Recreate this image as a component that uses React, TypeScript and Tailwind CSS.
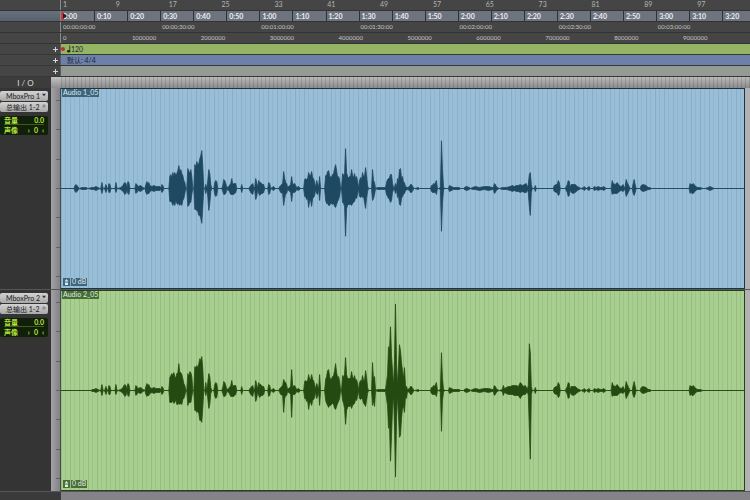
import { useState } from "react";
import { twMerge } from "tailwind-merge";

// [x, peak above the zero line, peak below it (same as above when left out)]
type Peak = [number, number, number?];

interface TrackProps {
  id: number;
  input: string;
  output: string;
  clip: string;
  peaks: Peak[];
  color: string;
  wave: string;
  badge: string;
}

const bars = [1, 9, 17, 25, 33, 41, 49, 57, 65, 73, 81, 89, 97];
const minSecs = Array.from(
  { length: 21 },
  (_, i) => `${Math.floor(i / 6)}:${(i % 6) * 10 || "00"}`
);
const timecodes = [
  "00:00:00:00",
  "00:00:30:00",
  "00:01:00:00",
  "00:01:30:00",
  "00:02:00:00",
  "00:02:30:00",
  "00:03:00:00",
];
const samples = Array.from({ length: 10 }, (_, i) => String(i * 1000000));

// quiet passages that both microphones picked up
const intro: Peak[] = [
  [31, 1], [33, 1], [35, 2], [37, 1], [39, 0], [40, 1], [41, 6, 5], [42, 1],
  [43, 0], [44, 1], [45, 4], [46, 1], [47, 0], [48, 5, 4], [49, 4], [50, 0],
  [54, 0], [55, 6, 4], [56, 1], [57, 0], [60, 1], [62, 3], [63, 5, 4],
  [64, 6], [65, 5], [66, 1], [67, 7, 5], [68, 6], [69, 0], [74, 0], [75, 5],
  [76, 4], [77, 2], [80, 3], [82, 1], [84, 0], [85, 4], [86, 7, 6], [87, 5],
  [88, 6, 5], [89, 3], [91, 2], [93, 3], [95, 2], [97, 2], [99, 2], [100, 1],
  [101, 4], [102, 3], [103, 0], [107, 0],
];
const middle: Peak[] = [
  [153, 0], [154, 6], [155, 8], [156, 7], [157, 0], [161, 0], [162, 3],
  [163, 9, 6], [164, 8, 6], [165, 5], [166, 1], [168, 2], [170, 5, 6],
  [171, 10, 6], [172, 4, 6], [173, 5, 6], [174, 5], [175, 5, 4], [176, 0],
  [180, 0], [181, 4], [182, 0], [188, 0], [190, 3, 4], [191, 4, 5],
  [192, 5, 6], [193, 1], [194, 1], [195, 10, 11], [196, 6, 8], [197, 1],
  [198, 8, 5], [199, 6, 7], [200, 6], [201, 5], [202, 4, 5], [203, 4],
  [204, 0], [207, 0], [208, 6], [209, 5], [210, 0], [213, 2], [214, 1],
  [215, 0], [218, 0], [219, 2], [220, 3, 4], [222, 5],
];
const pause: Peak[] = [
  [347, 1], [349, 2], [350, 4], [351, 4], [353, 1], [354, 0], [358, 1],
  [359, 0], [370, 0], [371, 3], [372, 3, 4], [373, 5, 4], [374, 4],
  [375, 6, 4], [376, 8, 6], [377, 0], [379, 0], [380, 2],
];
const rest: Peak[] = [
  [383, 2], [384, 0], [388, 0], [389, 3], [391, 2], [393, 1], [399, 1],
  [400, 0], [403, 0], [404, 1], [406, 2], [409, 1], [410, 0], [412, 1],
  [415, 2, 1], [419, 1, 2], [424, 2, 1], [428, 2], [432, 1], [433, 1],
  [434, 5], [435, 4], [436, 2], [437, 1], [439, 0], [442, 1],
];
const outro: Peak[] = [
  [471, 4], [472, 0], [474, 0], [475, 3], [476, 0], [493, 0], [494, 3],
  [496, 4], [497, 4], [498, 8, 7], [499, 6], [500, 0], [505, 0], [506, 2],
  [507, 4], [508, 8], [509, 7], [510, 1], [511, 4], [513, 4, 5], [515, 4],
  [517, 2], [519, 1], [521, 0], [523, 1], [524, 2], [526, 0], [529, 2],
  [530, 0], [533, 0], [534, 2], [536, 1], [538, 2], [540, 1], [542, 1],
  [543, 2], [545, 1], [546, 0], [551, 0], [552, 8, 6], [553, 5], [555, 4, 5],
  [557, 6, 5], [559, 3], [561, 2], [563, 4, 3], [564, 1], [565, 2],
  [566, 9, 8], [567, 6], [568, 4], [569, 2], [570, 0], [572, 0], [573, 5],
  [574, 9, 7], [575, 4], [576, 0], [580, 0], [581, 3, 2], [583, 4, 3],
  [586, 3, 2], [588, 1], [590, 1], [591, 0], [629, 0], [630, 5], [631, 4],
  [632, 4, 5], [633, 5], [635, 3], [637, 1], [640, 1], [643, 0],
];

const peaks1: Peak[] = [
  [0, 0], [13, 0], [14, 3], [15, 4], [17, 2], [18, 0], [21, 1], [25, 1], [27, 0],
  ...intro,
  [108, 0], [109, 12, 13], [110, 14, 13], [111, 11, 14], [112, 16, 17],
  [113, 13, 14], [114, 16, 17], [115, 13, 12], [116, 15], [117, 18, 16],
  [118, 23, 15], [119, 17], [120, 19, 15], [121, 15, 17], [122, 13, 12],
  [123, 8, 10], [124, 6, 5], [125, 0], [126, 1], [127, 20, 18], [128, 17],
  [129, 16, 14], [130, 19, 14], [131, 12, 6], [132, 0], [133, 0],
  [134, 24, 21], [135, 22, 21], [136, 27, 22], [137, 24, 23], [138, 25, 27],
  [139, 30, 27], [140, 33, 30], [141, 38, 35], [142, 22, 18], [143, 0],
  [144, 0], [145, 4, 5], [146, 0], [147, 8], [148, 19, 22], [149, 15],
  [150, 4, 3], [151, 0],
  ...middle,
  [223, 17], [224, 10], [225, 6, 5], [226, 5], [227, 1], [229, 3], [230, 4],
  [231, 12, 13], [232, 4], [234, 5, 4], [235, 3], [236, 1], [238, 2], [240, 0],
  [243, 0], [244, 9, 8], [245, 10, 8], [246, 9, 11], [247, 10], [248, 16, 19],
  [249, 13, 12], [250, 13, 12], [251, 17, 18], [252, 11, 10], [253, 10, 9],
  [254, 6, 7], [255, 1], [256, 8, 5], [257, 5, 6], [258, 1], [259, 12],
  [260, 0], [264, 0], [265, 13, 12], [266, 13, 15], [267, 17, 15],
  [268, 18, 17], [269, 13, 17], [270, 11, 15], [271, 12, 15], [272, 14, 16],
  [273, 15], [274, 20, 18], [275, 24, 19], [276, 18, 16], [277, 11, 13],
  [278, 12, 11], [279, 9, 8], [280, 0], [281, 1], [282, 15, 14], [283, 13, 15],
  [284, 15, 18], [285, 40, 48], [286, 16, 20], [287, 12, 17], [288, 11, 16],
  [289, 12, 16], [290, 12, 16], [291, 19, 17], [292, 13, 15], [293, 11, 14],
  [294, 15, 13], [295, 10, 9], [296, 12, 10], [297, 7, 6], [298, 0], [299, 8],
  [300, 11, 9], [301, 9, 8], [302, 16, 9], [303, 12, 8], [304, 12, 14],
  [305, 21, 20], [306, 13, 10], [307, 3], [308, 0], [311, 0], [312, 19, 12],
  [313, 8, 10], [314, 6], [315, 0], [317, 1], [321, 1], [325, 1], [326, 6],
  [327, 9, 8], [328, 10], [329, 11], [330, 14], [331, 14, 12], [332, 5, 4],
  [333, 1], [334, 1], [335, 5], [336, 1], [337, 10, 9], [338, 7],
  [339, 19, 16], [340, 20, 17], [341, 10], [342, 12, 8], [343, 6],
  [344, 6, 5], [345, 2],
  ...pause,
  [381, 48, 43], [382, 20, 15],
  ...rest,
  [446, 1], [450, 2], [452, 3], [454, 2], [456, 3], [458, 3], [460, 4],
  [462, 3], [464, 4], [466, 5, 4], [467, 1], [468, 4], [469, 14, 18],
  [470, 16, 27],
  ...outro,
  [645, 0], [648, 1], [650, 2], [652, 1], [654, 0], [684, 0],
];

const peaks2: Peak[] = [
  [0, 0], [15, 0], [30, 0],
  ...intro,
  [108, 0], [109, 13, 12], [110, 15, 12], [111, 17, 12], [112, 15, 10],
  [113, 18, 13], [114, 14, 12], [115, 13, 9], [116, 17, 14], [117, 18, 14],
  [118, 27, 13], [119, 18, 14], [120, 18, 13], [121, 16, 14], [122, 12, 9],
  [123, 7, 8], [124, 5], [125, 0], [126, 1], [127, 17, 15], [128, 14, 12],
  [129, 19, 12], [130, 18, 12], [131, 14, 6], [132, 0], [133, 0],
  [134, 24, 20], [135, 23, 20], [136, 25, 22], [137, 23, 21], [138, 27, 23],
  [139, 32, 30], [140, 30], [141, 34, 32], [142, 22, 17], [143, 0],
  [144, 0], [145, 8, 5], [146, 0], [147, 8], [148, 17, 18], [149, 14],
  [150, 3], [151, 0],
  ...middle,
  [223, 11, 22], [224, 9, 8], [225, 8, 5], [226, 5], [227, 1], [229, 3],
  [230, 4], [231, 21, 27], [232, 4], [234, 5, 4], [235, 3], [236, 1],
  [238, 2], [240, 0], [243, 0], [244, 9, 8], [245, 10, 8], [246, 9, 11],
  [247, 10], [248, 16, 19], [249, 11, 12], [250, 11, 12], [251, 16, 15],
  [252, 11, 10], [253, 10, 9], [254, 6, 7], [255, 1], [256, 7, 8],
  [257, 5, 6], [258, 1], [259, 16, 15], [260, 0], [264, 0], [265, 11, 10],
  [266, 14, 13], [267, 20, 15], [268, 21, 17], [269, 14, 15], [270, 11, 15],
  [271, 12, 14], [272, 14, 13], [273, 15, 14], [274, 20, 18], [275, 27, 19],
  [276, 18, 16], [277, 13], [278, 14, 11], [279, 9, 8], [280, 0], [281, 1],
  [282, 15, 10], [283, 13, 13], [284, 17, 18], [285, 33, 34], [286, 16, 20],
  [287, 12, 17], [288, 12, 16], [289, 12, 16], [290, 12, 15], [291, 19, 18],
  [292, 13, 15], [293, 12, 14], [294, 15, 13], [295, 10, 9], [296, 11, 10],
  [297, 7, 6], [298, 0], [299, 8], [300, 10, 9], [301, 9, 8], [302, 15, 9],
  [303, 10, 13], [304, 10, 14], [305, 20, 16], [306, 13, 10], [307, 3],
  [308, 0], [311, 0], [312, 28, 15], [313, 10], [314, 14, 16], [315, 0],
  [317, 1], [321, 1], [325, 1], [326, 8], [327, 16, 15], [328, 44, 38],
  [329, 40, 35], [330, 64, 71], [331, 35, 45], [332, 20, 18], [333, 5],
  [334, 30, 35], [335, 87, 87], [336, 28, 30], [337, 5], [338, 25],
  [339, 46, 47], [340, 40, 45], [341, 28], [342, 20, 18], [343, 12, 16],
  [344, 23, 22], [345, 5, 6], [346, 4, 8],
  ...pause,
  [381, 38, 41], [382, 12, 10],
  ...rest,
  [443, 5], [444, 2], [446, 3], [448, 4], [450, 4], [452, 5, 4], [454, 5],
  [456, 5], [458, 4, 5], [460, 8], [461, 7, 6], [463, 4], [465, 5, 4],
  [467, 1], [468, 5], [469, 47, 38], [470, 38, 69],
  ...outro,
  [684, 0],
];

const tracks: TrackProps[] = [
  {
    id: 1,
    input: "MboxPro 1",
    output: "总输出 1-2",
    clip: "Audio 1_05",
    peaks: peaks1,
    color:
      "border-[#1d3442] bg-[#99bed7] bg-[repeating-linear-gradient(90deg,#87adc7_0px,#87adc7_1px,transparent_1px,transparent_4px,#8fb4cd_4px,#8fb4cd_5px,transparent_5px,transparent_9px)]",
    wave: "fill-[#1f4863] stroke-[#1f4863]",
    badge: "bg-[#3d657f]",
  },
  {
    id: 2,
    input: "MboxPro 2",
    output: "总输出 1-2",
    clip: "Audio 2_05",
    peaks: peaks2,
    color:
      "border-[#26401b] bg-[#a8cf90] bg-[repeating-linear-gradient(90deg,#95bd7e_0px,#95bd7e_1px,transparent_1px,transparent_4px,#9cc485_4px,#9cc485_5px,transparent_5px,transparent_9px)]",
    wave: "fill-[#244a12] stroke-[#244a12]",
    badge: "bg-[#476e35]",
  },
];

const toPath = (peaks: Peak[]) => {
  const top = peaks.map(([x, up]) => `${x},${100 - up}`);
  const bottom = peaks.map(([x, up, down]) => `${x},${100 + (down ?? up)}`);
  return `M${top.join("L")}L${bottom.reverse().join("L")}Z`;
};

const App = () => {
  return (
    <main className="min-h-screen bg-[#858387] font-['Lato','Noto_Sans_CJK_SC',sans-serif] text-[7px] leading-none">
      <header className="bg-[#454545] text-[#b4b4b4]">
        <Ruler labels={bars} cell={twMerge(cell, "w-[7.67%] pt-px")} />
        <Ruler
          labels={minSecs}
          head="bg-linear-to-b from-[#66717d] to-[#58616b]"
          strip="bg-[#6d747e] font-bold text-[#eceef0]"
          cell={twMerge(cell, "w-[4.8%] border-l border-[#2e3135]")}
          cursor
        />
        <Ruler
          labels={timecodes}
          cell={twMerge(cell, "w-[14.39%] text-[6px] text-[#c6c6c6]")}
        />
        <Ruler
          labels={samples}
          cell={twMerge(cell, "w-[10%] text-[6px] text-[#c6c6c6]")}
        />
        <Lane name="速度" color="bg-[#95b564]">
          <span className="size-1 rounded-full bg-[#c02b3c]" />
          <svg viewBox="0 0 5 9" className="ml-0.5 h-2 w-1 text-[#1b2412]">
            <ellipse cx="2" cy="7.4" rx="2" ry="1.5" fill="currentColor" />
            <path d="M3.5 0V7.4" stroke="currentColor" />
          </svg>
          <span>120</span>
        </Lane>
        <Lane name="拍号" color="bg-[#6d80aa]">
          <span className="pl-1.5">默认: 4/4</span>
        </Lane>
        <Lane name="标记" color="bg-[#949a94]" />
      </header>

      <div className="flex h-[11px] text-[#dcdcdc]">
        <div className="flex w-[51px] shrink-0 items-center justify-center bg-[#3c3c3c] text-[8px]">
          I / O
        </div>
        <div className="w-2.5 shrink-0 bg-linear-to-b from-[#c2c2c4] to-[#8f8f92]" />
        <div className="flex-1 bg-[repeating-linear-gradient(90deg,#0002_0px,#0002_1px,transparent_1px,transparent_4px),linear-gradient(#bababa,#8b8b8b)]" />
      </div>

      {tracks.map((track) => (
        <Track key={track.id} {...track} />
      ))}
      <footer className="h-3 w-[61px] bg-[#3a3a3a]" />
    </main>
  );
};

export default App;

interface RulerProps {
  labels: (string | number)[];
  cell: string;
  head?: string;
  strip?: string;
  cursor?: boolean;
}

const Ruler = ({ labels, cell, head, strip, cursor }: RulerProps) => (
  <div className="flex border-b border-[#333333]">
    <div className={twMerge("w-[61px] shrink-0 border-r border-[#8a8a8a]", head)} />
    <ol className={twMerge("relative flex min-w-0 flex-1 overflow-hidden", strip)}>
      {labels.map((label) => (
        <li key={label} className={cell}>
          {label}
        </li>
      ))}
      {/* playback cursor */}
      {cursor && (
        <svg viewBox="0 0 6 10" className="absolute left-0 top-0 h-2.5 w-1.5">
          <path d="M0 1H2V9H0Z" fill="#d8323f" />
          <path d="M2 2L6 5L2 8Z" fill="#2a1b20" />
        </svg>
      )}
    </ol>
  </div>
);

interface LaneProps {
  name: string;
  color: string;
  children?: React.ReactNode;
}

const Lane = ({ name, color, children }: LaneProps) => (
  <div className="flex h-[11px] border-b border-[#343a33] text-[#1d2733]">
    <div className="flex w-[61px] shrink-0 items-center justify-end border-r border-[#5c5c5c] pr-0.5">
      <button aria-label={name} className="cursor-pointer">
        <svg viewBox="0 0 5 5" className="size-[5px]">
          <path d="M0 2.5H5M2.5 0V5" stroke="#d4d4d4" />
        </svg>
      </button>
    </div>
    <div className={twMerge("flex flex-1 items-center", color)}>{children}</div>
  </div>
);

const Track = ({ id, input, output, clip, peaks, color, wave, badge }: TrackProps) => {
  const [source, setSource] = useState(input);
  const [target, setTarget] = useState(output);

  return (
    <section className="flex border-b border-[#55585a] bg-[#b2b2b4]">
      <div className="w-[51px] shrink-0 bg-[#343434] pr-[3px] pt-[3px]">
        <div className="flex flex-col gap-px">
          <Picker
            label={`输入 ${id}`}
            value={source}
            options={["MboxPro 1", "MboxPro 2"]}
            onChange={setSource}
          >
            <path d="M0 1H5L2.5 4Z" fill="#333" />
          </Picker>
          <Picker
            label={`输出 ${id}`}
            value={target}
            options={["总输出 1-2"]}
            onChange={setTarget}
          >
            <path d="M0 2.5H5M2.5 0V5" stroke="#777" />
          </Picker>
        </div>
        <dl className="mt-1 flex flex-col gap-px rounded-xs bg-[#10200a] px-1 py-px font-bold text-[#b5e23c]">
          <div className="flex h-2 items-center justify-between border-b border-[#3f5a1c]">
            <dt>音量</dt>
            <dd>0.0</dd>
          </div>
          <div className="flex h-2 items-center justify-between">
            <dt>声像</dt>
            <dd className="flex gap-1">
              <span>›</span>
              <span>0</span>
              <span>‹</span>
            </dd>
          </div>
        </dl>
      </div>

      <div className="flex w-2.5 shrink-0 flex-col items-end justify-between border-r border-[#4b4b4d] bg-linear-to-r from-[#a2a2a5] to-[#838387] py-3">
        {[0, 1, 2, 3, 4, 5, 6].map((tick) => (
          <span key={tick} className="h-px w-1 bg-[#626266]" />
        ))}
      </div>

      <div className={twMerge("relative mr-[5px] h-[201px] min-w-0 flex-1 border-y border-r", color)}>
        <svg
          viewBox="0 0 684 200"
          preserveAspectRatio="none"
          className={twMerge("size-full", wave)}
        >
          <path d={toPath(peaks)} strokeWidth="0.8" />
        </svg>
        <span className={twMerge("absolute left-px top-0 px-px pb-px text-[#dfe9e4]", badge)}>
          {clip}
        </span>
        <span className="absolute bottom-0.5 left-0.5 flex items-center gap-px text-[#e3ebe6]">
          <svg viewBox="0 0 7 8" className={twMerge("h-2 w-[7px]", badge)}>
            <path d="M3.5 1L5.5 3.5H1.5ZM2 4.5H5V7H2Z" fill="#e3ebe6" />
          </svg>
          <span className={twMerge("px-px pb-px", badge)}>0 dB</span>
        </span>
      </div>
    </section>
  );
};

interface PickerProps {
  label: string;
  value: string;
  options: string[];
  onChange: (value: string) => void;
  children: React.ReactNode;
}

const Picker = ({ label, value, options, onChange, children }: PickerProps) => (
  <div className="relative">
    <select
      aria-label={label}
      value={value}
      onChange={(e) => onChange(e.target.value)}
      className="block h-2.5 w-full cursor-pointer appearance-none rounded-xs bg-linear-to-b from-[#d2d2d2] to-[#a9a9a9] pl-1.5 text-[7px] leading-none text-[#1c1c1c]"
    >
      {options.map((option) => (
        <option key={option}>{option}</option>
      ))}
    </select>
    <svg viewBox="0 0 5 5" className="pointer-events-none absolute right-0.5 top-0.5 size-1">
      {children}
    </svg>
  </div>
);

const cell =
  "h-2.5 shrink-0 overflow-hidden whitespace-nowrap pl-0.5 pt-0.5 first:border-l-0";
